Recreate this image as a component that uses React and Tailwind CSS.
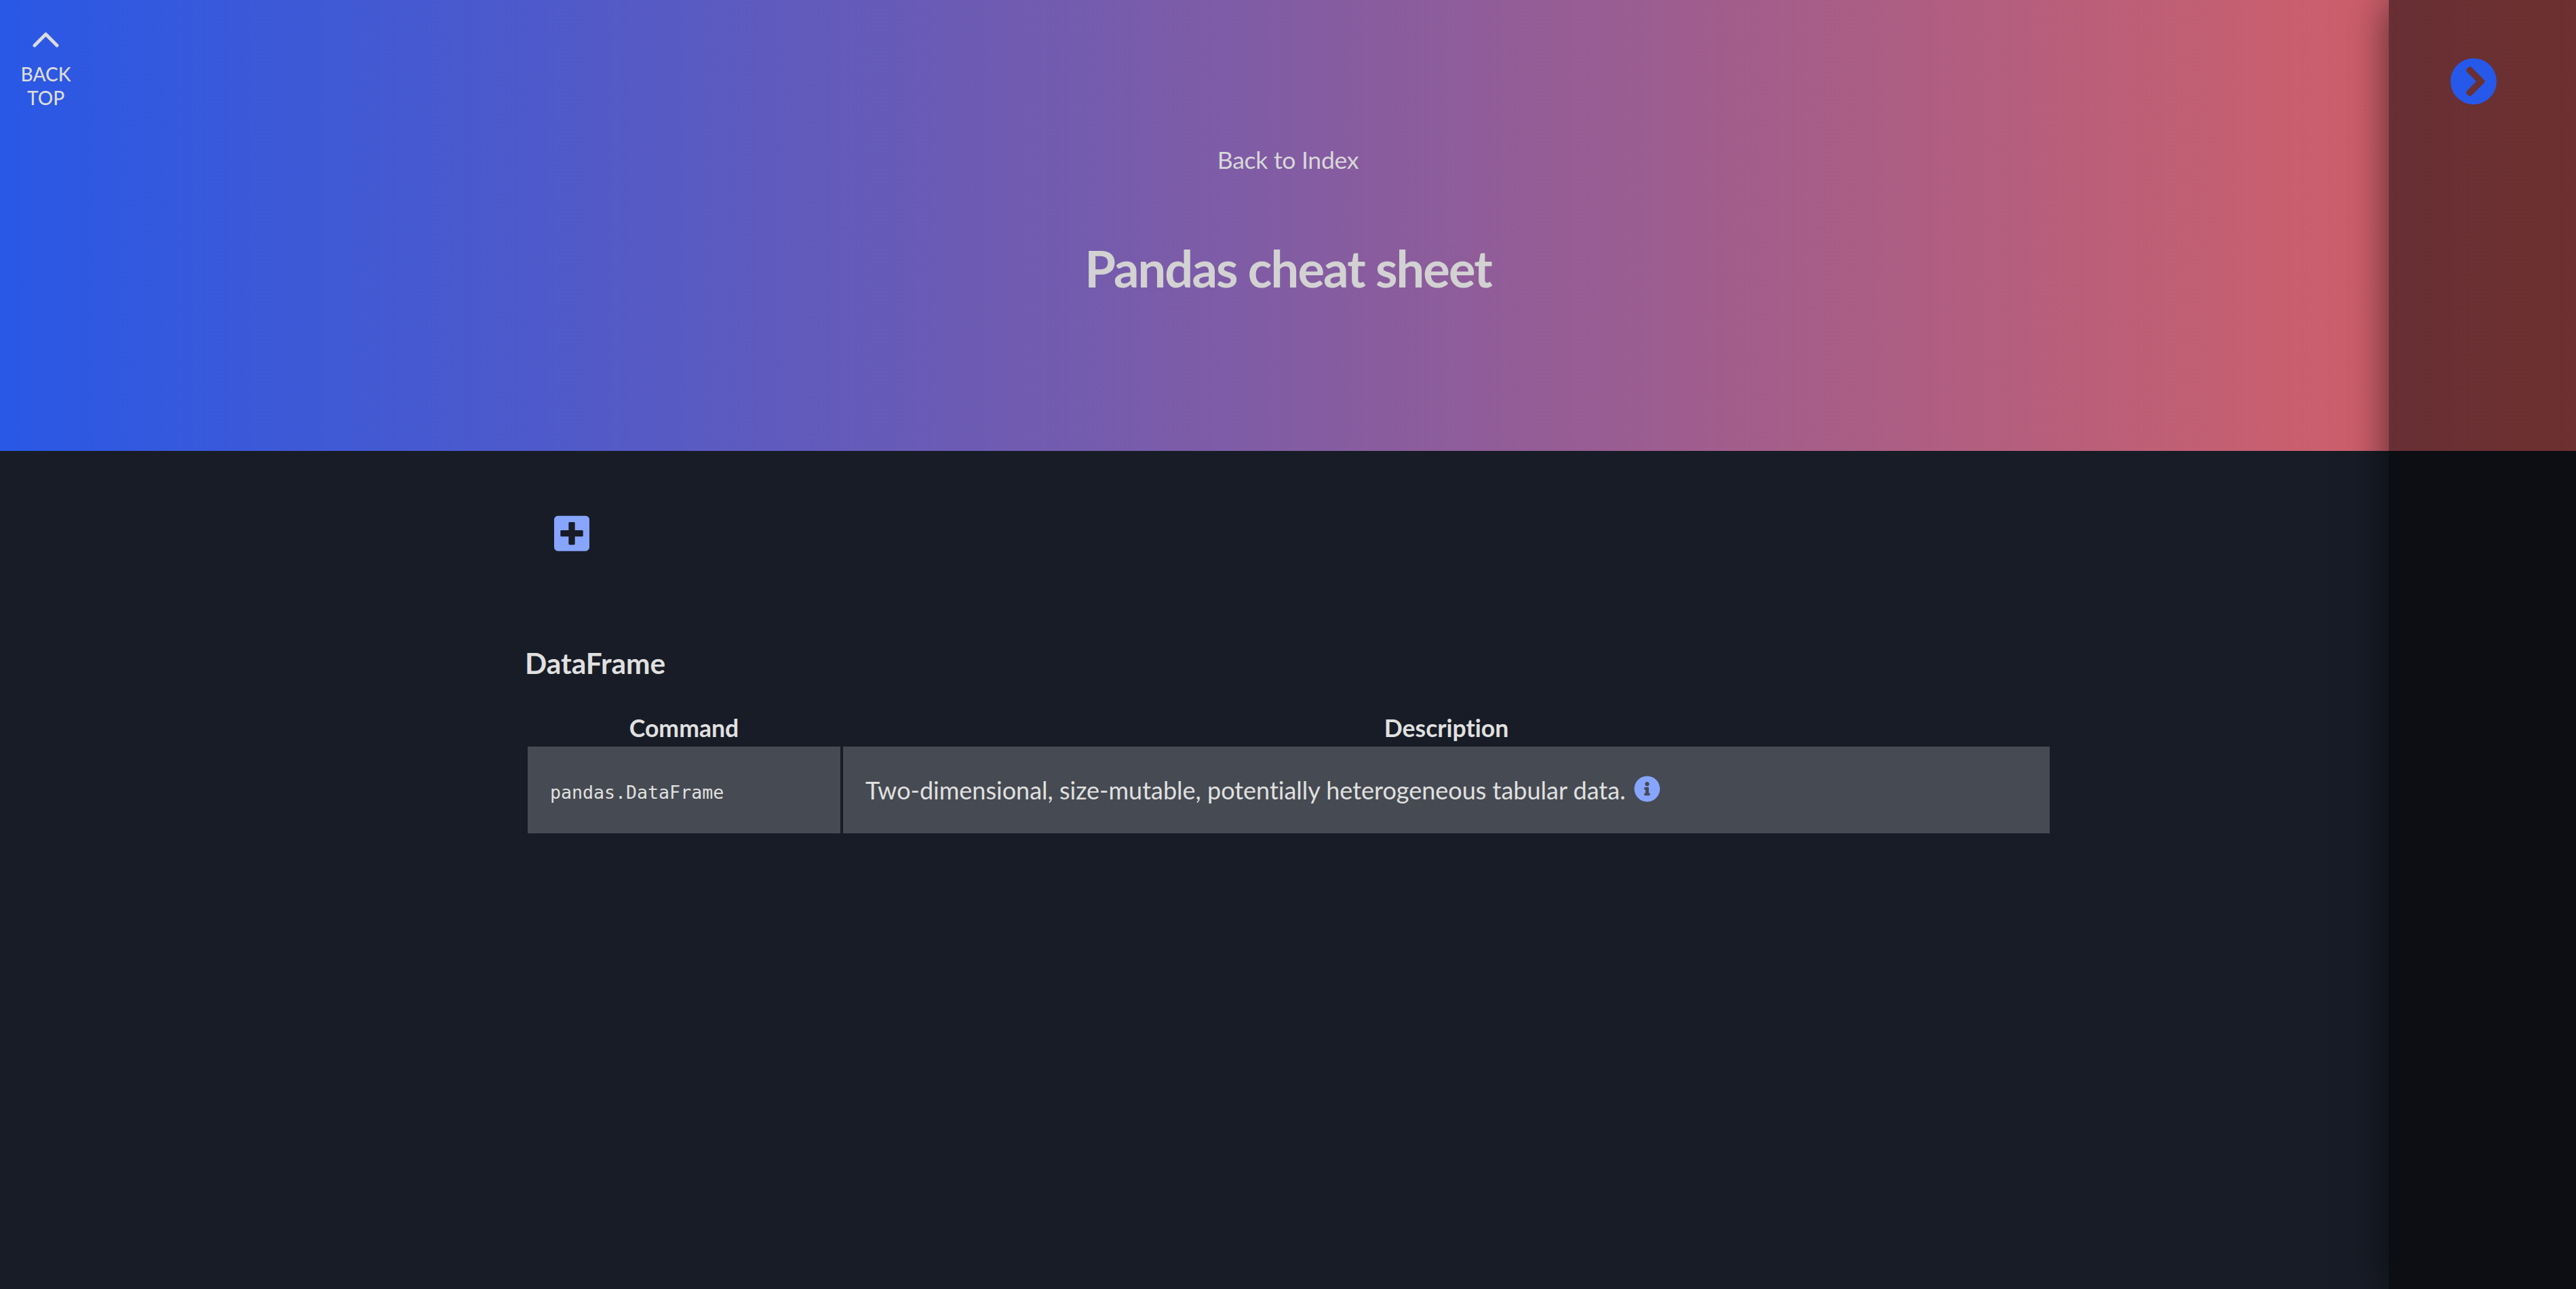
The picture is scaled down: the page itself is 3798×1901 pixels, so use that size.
import { FaChevronCircleRight, FaInfoCircle, FaPlusSquare } from 'react-icons/fa'

const ROWS = [
  {
    command: 'pandas.DataFrame',
    description: 'Two-dimensional, size-mutable, potentially heterogeneous tabular data.',
  },
]

export default function App() {
  return (
    <div className="relative min-h-[1901px] overflow-hidden bg-[#181c26] font-['Lato',sans-serif] text-[#e0e0e0] [font-variant-ligatures:none]">

      {/* Back to top */}
      <a className="absolute left-0 top-[47px] flex w-[135px] flex-col items-center text-[28px] font-medium leading-[35px] text-[#dcdcdc]">
        <svg className="mb-[22px] h-[23px] w-[39px]" viewBox="0 0 39 23" fill="none" stroke="currentColor" strokeWidth="5" strokeLinecap="round" strokeLinejoin="round">
          <polyline points="3,20 19.5,3.5 36,20" />
        </svg>
        <span>BACK</span>
        <span>TOP</span>
      </a>

      {/* Right rail */}
      <aside className="absolute inset-y-0 right-0 flex w-[276px] justify-center bg-black/50 pr-[27px] pt-[85px] shadow-[0_0_60px_rgba(0,0,0,0.6)]">
        <FaChevronCircleRight className="h-[70px] w-[70px] text-[#2659ea]" />
      </aside>

      <header className="flex h-[665px] flex-col items-center bg-[linear-gradient(to_right,#2958e6,#dc6060)] pt-[211px]">
        <a className="text-[35.6px] leading-[50px] tracking-[-0.3px] text-[#d8d8d8]">Back to Index</a>
        <h1 className="mt-[90px] text-[74px] font-bold leading-[90px] tracking-[-1.9px] text-[#d2d2d2]">Pandas cheat sheet</h1>
      </header>

      <main className="mx-auto w-[2254px] pt-[92px]">
        <div className="pl-[45px]">
          <FaPlusSquare className="h-[59.4px] w-[52px] text-[#87a5ff]" />
        </div>

        <h2 className="ml-[2px] mt-[134px] text-[42.4px] font-bold leading-[56px]">DataFrame</h2>

        <table className="ml-[2px] mt-[43px] w-[2252px] border-separate border-spacing-[4px]">
          <thead>
            <tr className="text-[35.6px] font-bold">
              <th className="w-[461px] p-0 pb-[2px] leading-[42px]">Command</th>
              <th className="p-0 pb-[2px] leading-[42px]">Description</th>
            </tr>
          </thead>
          <tbody>
            {ROWS.map(row => (
              <tr key={row.command} className="bg-[#464a52]">
                <td className="h-[128px] pl-[33px] pt-[7px] font-['DejaVu_Sans_Mono',monospace] text-[26.6px]">{row.command}</td>
                <td className="px-[33px] text-[36px]">
                  {row.description}
                  <FaInfoCircle className="relative top-[2px] ml-[12px] inline-block h-[39px] w-[39px] align-[-2px] text-[#87a5ff]" />
                </td>
              </tr>
            ))}
          </tbody>
        </table>
      </main>
    </div>
  )
}
